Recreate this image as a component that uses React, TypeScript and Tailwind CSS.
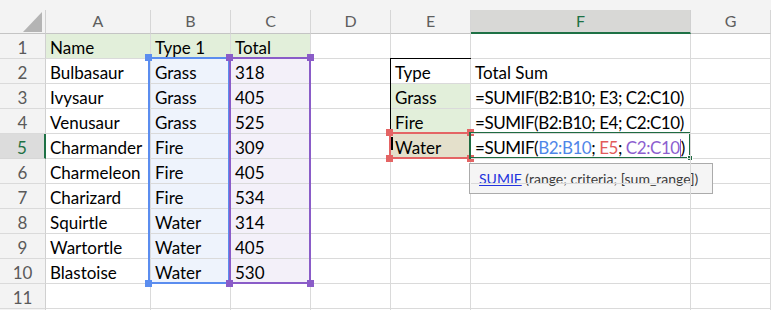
import type { ReactNode } from "react";

const FONT = "font-['Lato','Open_Sans',sans-serif]";

type Row = {
  n: number;
  a?: string;
  b?: string;
  c?: string;
  e?: string;
  f?: ReactNode;
};

const rows: Row[] = [
  { n: 1, a: "Name", b: "Type 1", c: "Total" },
  { n: 2, a: "Bulbasaur", b: "Grass", c: "318", e: "Type", f: "Total Sum" },
  { n: 3, a: "Ivysaur", b: "Grass", c: "405", e: "Grass", f: "=SUMIF(B2:B10; E3; C2:C10)" },
  { n: 4, a: "Venusaur", b: "Grass", c: "525", e: "Fire", f: "=SUMIF(B2:B10; E4; C2:C10)" },
  {
    n: 5,
    a: "Charmander",
    b: "Fire",
    c: "309",
    e: "Water",
    f: (
      <>
        =SUMIF(<span className="text-[#4f86e8]">B2:B10</span>;{" "}
        <span className="text-[#e25c5c]">E5</span>;{" "}
        <span className="text-[#8d5fcf]">C2:C10</span>
        <span className="inline-block h-[18px] w-px translate-y-[3px] bg-[#8d5fcf]" />)
      </>
    ),
  },
  { n: 6, a: "Charmeleon", b: "Fire", c: "405" },
  { n: 7, a: "Charizard", b: "Fire", c: "534" },
  { n: 8, a: "Squirtle", b: "Water", c: "314" },
  { n: 9, a: "Wartortle", b: "Water", c: "405" },
  { n: 10, a: "Blastoise", b: "Water", c: "530" },
  { n: 11 },
  { n: 0 },
];

const cols = ["A", "B", "C", "D", "E", "F", "G", ""];

const cell =
  "h-[25px] border-b border-r border-[#dadada] pl-[4px] text-[17px] leading-[27px] text-black whitespace-nowrap";

// range highlight box with square handles on its corners
function Range({ box, color, corners }: { box: string; color: string; corners: string[] }) {
  return (
    <div className={`absolute border-2 ${box}`} style={{ borderColor: color }}>
      {corners.map((c) => (
        <span key={c} className={`absolute h-[7px] w-[7px] ${c}`} style={{ backgroundColor: color }} />
      ))}
    </div>
  );
}

const TL = "-left-[5px] -top-[5px]";
const TR = "-right-[5px] -top-[5px]";
const BL = "-left-[5px] -bottom-[5px]";
const BR = "-right-[5px] -bottom-[5px]";

function bgFor(row: Row, col: string) {
  if (row.n === 1 && (col === "a" || col === "b" || col === "c")) return "bg-[#e2efda]";
  if (row.n >= 2 && row.n <= 10 && col === "b") return "bg-[#eef3fc]";
  if (row.n >= 2 && row.n <= 10 && col === "c") return "bg-[#f3f0f9]";
  if ((row.n === 3 || row.n === 4) && col === "e") return "bg-[#e2efda]";
  if (row.n === 5 && col === "e") return "bg-[#e4e0cb]";
  return "bg-white";
}

export default function App() {
  return (
    <div className={`relative h-[310px] w-[771px] overflow-hidden bg-white ${FONT}`}>
      <div className="h-[10px] bg-[#f3f3f3]" />
      <div className="grid grid-cols-[46px_105px_80px_80px_80px_80px_220px_80px_1fr]">
        {/* corner */}
        <div className="flex h-[24px] items-end justify-end border-b border-r border-b-[#c4c4c4] border-r-[#d0d0d0] bg-[#f3f3f3] pb-[1px] pr-[3px]">
          <svg width="19" height="20" viewBox="0 0 19 20">
            <polygon points="19,0 19,20 0,20" fill="#b4b4b4" />
          </svg>
        </div>
        {cols.map((c) =>
          c === "F" ? (
            <div
              key={c}
              className="h-[24px] border-b-2 border-r border-b-[#1e7145] border-r-[#d0d0d0] bg-[#d8d8d6] text-center text-[16px] leading-[21px] text-[#1e7145]"
            >
              {c}
            </div>
          ) : (
            <div
              key={c || "h"}
              className="h-[24px] border-b border-r border-b-[#c4c4c4] border-r-[#d6d6d6] bg-[#f3f3f3] text-center text-[16px] leading-[21px] text-[#5e5e5e]"
            >
              {c}
            </div>
          )
        )}

        {rows.map((row, i) => (
          <div key={i} className="contents">
            {row.n === 5 ? (
              <div className="h-[25px] border-b border-r-2 border-b-[#d6d6d6] border-r-[#1e7145] bg-[#dcdcdc] text-center text-[17px] leading-[27px] text-[#1e7145]">
                {row.n}
              </div>
            ) : (
              <div className="h-[25px] border-b border-r border-b-[#dadada] border-r-[#d0d0d0] bg-[#f3f3f3] text-center text-[17px] leading-[27px] text-[#5a5a5a]">
                {row.n || ""}
              </div>
            )}
            <div className={`${cell} ${bgFor(row, "a")}`}>{row.a}</div>
            <div className={`${cell} ${bgFor(row, "b")}`}>{row.b}</div>
            <div className={`${cell} ${bgFor(row, "c")}`}>{row.c}</div>
            <div className={`${cell} bg-white`} />
            <div className={`${cell} ${bgFor(row, "e")}`}>{row.e}</div>
            <div
              className={`${cell} relative z-10 bg-transparent pl-[3px] ${
                row.n >= 3 && row.n <= 5 ? "tracking-[-0.45px]" : ""
              }`}
            >
              {row.f}
            </div>
            <div className={`${cell} bg-white`} />
            <div className={`${cell} bg-white`} />
          </div>
        ))}
      </div>

      {/* table outline E2:F5 */}
      <div className="absolute left-[390px] top-[58px] h-[101px] w-[301px] border border-black" />

      <Range box="left-[148px] top-[57px] h-[227px] w-[82px]" color="#5b8def" corners={[TL, BL]} />
      <Range box="left-[229px] top-[57px] h-[227px] w-[82px]" color="#8a5cc8" corners={[TL, TR, BL, BR]} />
      <Range box="left-[389px] top-[132px] h-[27px] w-[82px]" color="#e46464" corners={[TL, TR, BL, BR]} />
      <span className="absolute left-[391px] top-[137px] h-[13px] w-[2px] bg-black" />

      {/* F5 active cell */}
      <div className="absolute left-[469px] top-[132px] h-[27px] w-[222px] border-2 border-[#1e6b41]">
        <span className="absolute -bottom-[4px] -right-[4px] h-[6px] w-[6px] border border-white bg-[#1e6b41]" />
      </div>

      {/* tooltip */}
      <div className="absolute left-[469px] top-[163px] flex h-[31px] w-[244px] items-center border border-[#ababab] bg-[#f5f5f5] pl-[9px] text-[14px] text-[#3c3c3c] whitespace-nowrap">
        <span className="text-[#2233dd] underline">SUMIF</span>
        <span>&nbsp;(range; criteria; [sum_range])</span>
      </div>
    </div>
  );
}
